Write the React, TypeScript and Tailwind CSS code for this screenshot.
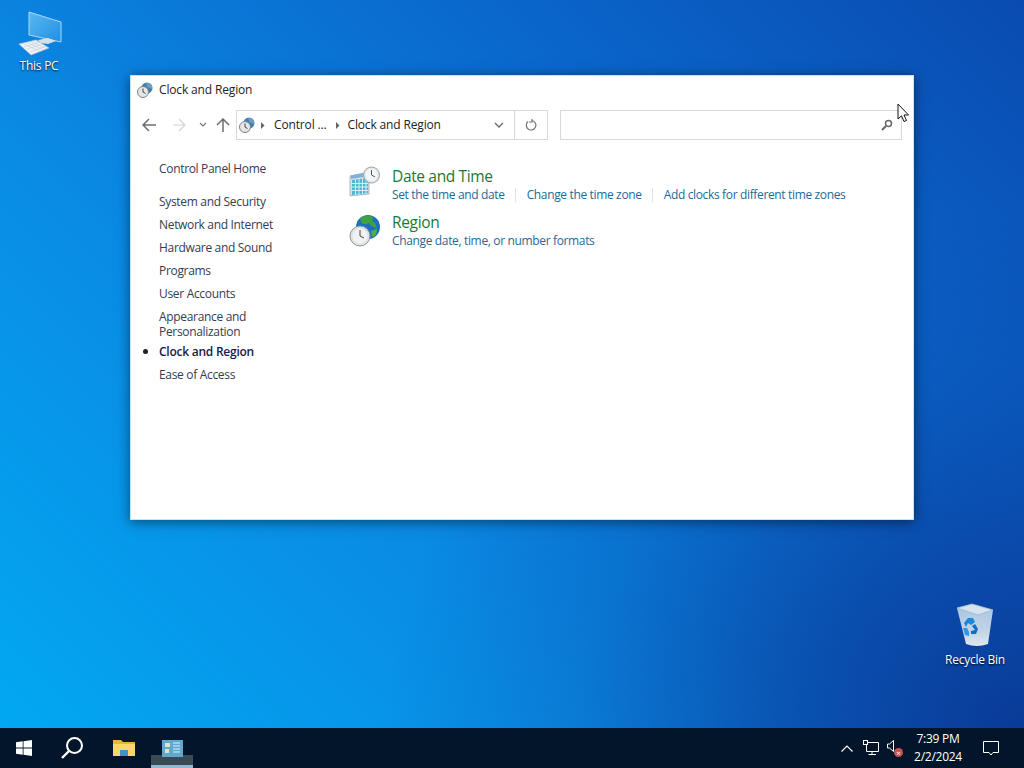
const font = { fontFamily: '"Open Sans", "Noto Sans", sans-serif' }

function ClockBadge({ size = 16 }: { size?: number }) {
  return (
    <svg width={size} height={size} viewBox="0 0 16 16">
      <circle cx="10" cy="6" r="5.500" fill="#3d7fb5" />
      <path d="M8 1.500 Q11 3 10 5 Q13 6 15 7 Q16 3 12 1 Z" fill="#6f9fb8" />
      <circle cx="6" cy="10" r="5.500" fill="#e4e6e8" stroke="#7b8288" strokeWidth="1" />
      <path d="M6 6.500V10L8.500 11.500" stroke="#444" strokeWidth="1" fill="none" />
    </svg>
  )
}

function ThisPcIcon() {
  return (
    <svg width="48" height="48" viewBox="0 0 48 48">
      <defs>
        <linearGradient id="pcScreen" x1="0" y1="0" x2="1" y2="1">
          <stop offset="0" stopColor="#5cb8f2" />
          <stop offset="1" stopColor="#1f8fe4" />
        </linearGradient>
      </defs>
      <path d="M14 3 L46 13 V33 L14 26 Z" fill="url(#pcScreen)" stroke="#a9d8f4" strokeWidth="1" />
      <path d="M23 31 L33 29 L41 32 L33 35 L25 34 Z" fill="#d5dfe6" />
      <path d="M4 35 L21 31 L34 39 L16 46 Z" fill="#eef3f7" stroke="#b7c4ce" strokeWidth="0.700" />
      <path d="M8 34.500 L25 42.500 M12 33.500 L29 41 M16 32.500 L32 40 M9 38 L25 33 M12 40 L28 35 M15 43 L31 37" stroke="#b7c4ce" strokeWidth="0.500" />
    </svg>
  )
}

function BinIcon() {
  return (
    <svg width="48" height="48" viewBox="0 0 48 48">
      <defs>
        <linearGradient id="binBody" x1="0" y1="0" x2="0" y2="1">
          <stop offset="0" stopColor="#a6c4e2" />
          <stop offset="0.700" stopColor="#c4d6e8" />
          <stop offset="1" stopColor="#e4e8ea" />
        </linearGradient>
      </defs>
      <path d="M6 5 L21 1 L42 7 L37 41 Q26 45 15 41 Z" fill="url(#binBody)" />
      <path d="M6 5 L21 1 L42 7 L27 12 Z" fill="#d6e3ee" stroke="#9db6cc" strokeWidth="0.800" />
      <path d="M13 20 L17 15 L22 15 L24 19 L20 22 L17 20 L15 24 Z" fill="#1a86dc" />
      <path d="M24 21 L27 26 L25 31 L20 31 L20 28 L24 27 L21 23 Z" fill="#0f6fc4" />
      <path d="M12 25 L16 25 L18 29 L18 33 L14 32 Z" fill="#2d97e6" />
    </svg>
  )
}

function DateTimeIcon() {
  return (
    <svg width="32" height="32" viewBox="0 0 32 32">
      <path d="M1 10 L20 6 V28 L1 30 Z" fill="#d5e3ec" stroke="#8fa3b3" strokeWidth="0.700" />
      <path d="M2 9.500 L20 6 V10 L2 13 Z" fill="#7fb2d4" />
      <path d="M3 14 L19 12 V27 L3 29 Z" fill="#4bb8d6" />
      <path d="M3 17.500 H19 M3 21 H19 M3 24.500 H19 M6.500 13.500 V29 M10 13 V28.500 M13.500 12.700 V28 M17 12.300 V27.500" stroke="#e8f4f8" strokeWidth="0.900" />
      <circle cx="22.500" cy="9" r="8" fill="#e6e8ea" stroke="#9aa1a7" strokeWidth="1" />
      <circle cx="22.500" cy="9" r="6" fill="#f4f5f6" />
      <path d="M22.500 4 V9 L26 11" stroke="#555" strokeWidth="1" fill="none" />
    </svg>
  )
}

function RegionIcon() {
  return (
    <svg width="32" height="34" viewBox="0 0 32 34">
      <circle cx="19" cy="13" r="12" fill="#1f6fc0" />
      <path d="M11 4 Q18 0 24 3 Q22 8 26 9 L28 14 Q22 13 20 9 Q15 12 12 8 Z" fill="#3fa33d" />
      <path d="M22 17 L28 15 Q28 22 23 23 Z" fill="#4caf3f" />
      <circle cx="11" cy="22" r="10" fill="#dfe1e3" stroke="#8e959b" strokeWidth="1" />
      <circle cx="11" cy="22" r="7.500" fill="#f1f2f3" />
      <path d="M11 16 V22 L15 24" stroke="#444" strokeWidth="1" fill="none" />
    </svg>
  )
}

function NavLink({ children, active }: { children: React.ReactNode; active?: boolean }) {
  return (
    <div className={`relative text-[12px] leading-[15px] ${active ? 'font-semibold tracking-[-0.25px] text-[#1a1a4a]' : 'tracking-[-0.32px] text-[#333d4f]'}`}>
      {active && <span className="absolute -left-[16px] top-[5px] h-[5px] w-[5px] rounded-full bg-[#222]" />}
      {children}
    </div>
  )
}

function TaskLink({ children }: { children: React.ReactNode }) {
  return <span className="text-[#1e6a96]">{children}</span>
}

function Divider() {
  return <span className="mx-[10.500px] h-[14px] w-px bg-[#e2e2e2]" />
}

function Crumb() {
  return (
    <svg width="5" height="7" viewBox="0 0 5 7" fill="#666">
      <path d="M1 0L4.500 3.500L1 7Z" />
    </svg>
  )
}

export default function App() {
  return (
    <div className="flex h-screen w-screen flex-col overflow-hidden" style={font}>
      <div
        className="relative flex-1"
        style={{
          background:
            'radial-gradient(ellipse 640px 520px at 100% 100%, #0a3a98 0%, rgba(10,58,152,0.65) 35%, rgba(10,58,152,0.2) 70%, rgba(10,58,152,0) 100%), linear-gradient(225deg, #0a4bb0 0%, #0a66cc 30%, #0a8ae4 65%, #02a8f2 100%)',
        }}
      >
        {/* desktop icons */}
        <div className="absolute left-[14px] top-[9px] flex w-[50px] flex-col items-center">
          <ThisPcIcon />
          <span className="mt-[1px] whitespace-nowrap text-[12px] leading-[16px] tracking-[-0.25px] text-white [text-shadow:0_1px_2px_#000]">This PC</span>
        </div>
        <div className="absolute left-[945px] top-[603px] flex w-[60px] flex-col items-center">
          <BinIcon />
          <span className="mt-[1px] whitespace-nowrap text-[12px] leading-[16px] tracking-[-0.25px] text-white [text-shadow:0_1px_2px_#000]">Recycle Bin</span>
        </div>

        {/* Clock and Region window */}
        <div className="absolute left-[130px] top-[75px] flex h-[445px] w-[784px] flex-col bg-white shadow-[0_2px_12px_rgba(0,0,0,0.5)] outline outline-1 -outline-offset-1 outline-[#bfe6fa]">
          <div className="flex h-[30px] items-center gap-[6px] pl-[7px]">
            <ClockBadge />
            <span className="text-[12px] tracking-[-0.15px] text-[#222]">Clock and Region</span>
          </div>

          <div className="mt-[5px] flex h-[30px] items-center pl-[12px]">
            <svg width="14" height="14" viewBox="0 0 14 14" fill="none" stroke="#6d6d6d" strokeWidth="1.500">
              <path d="M1 7H14M7 1L1 7L7 13" />
            </svg>
            <svg className="ml-[16px]" width="14" height="14" viewBox="0 0 14 14" fill="none" stroke="#d4d4d4" strokeWidth="1.200">
              <path d="M1 7H13M7 1L13 7L7 13" />
            </svg>
            <svg className="ml-[13px]" width="8" height="6" viewBox="0 0 8 6" fill="none" stroke="#777" strokeWidth="1.200">
              <path d="M1 1L4 4L7 1" />
            </svg>
            <svg className="ml-[9px]" width="14" height="14" viewBox="0 0 14 14" fill="none" stroke="#6d6d6d" strokeWidth="1.500">
              <path d="M7 14V1M1 7L7 1L13 7" />
            </svg>
            <div className="ml-[6px] flex h-[30px] w-[312px] items-center border border-[#d9d9d9]">
              <div className="ml-[2px]"><ClockBadge /></div>
              <span className="ml-[5px]"><Crumb /></span>
              <span className="ml-[9px] text-[12px] tracking-[-0.15px] text-[#222]">Control ...</span>
              <span className="ml-[8px]"><Crumb /></span>
              <span className="ml-[8px] text-[12px] tracking-[-0.15px] text-[#222]">Clock and Region</span>
              <svg className="ml-auto mr-[10px]" width="10" height="6" viewBox="0 0 10 6" fill="none" stroke="#666" strokeWidth="1.300">
                <path d="M1 1L5 5L9 1" />
              </svg>
              <div className="flex h-full w-[33px] items-center justify-center border-l border-[#d9d9d9]">
                <svg width="12" height="12" viewBox="0 0 12 12" fill="none" stroke="#777" strokeWidth="1.200">
                  <path d="M7 1.500A4.800 4.800 0 1 1 3 2.500M7 0V3H4" />
                </svg>
              </div>
            </div>
            <div className="ml-[12px] flex h-[30px] w-[342px] items-center justify-end border border-[#d9d9d9] pr-[8px]">
              <svg width="12" height="12" viewBox="0 0 12 12" fill="none" stroke="#666" strokeWidth="1.500">
                <circle cx="7.500" cy="4.500" r="3" />
                <path d="M5 7L1 11" strokeWidth="2" />
              </svg>
            </div>
          </div>

          <div className="flex flex-1">
            <div className="flex w-[219px] flex-col pl-[29px] pt-[21px]">
              <NavLink>Control Panel Home</NavLink>
              <div className="mt-[18px] flex flex-col gap-[8px]">
                <NavLink>System and Security</NavLink>
                <NavLink>Network and Internet</NavLink>
                <NavLink>Hardware and Sound</NavLink>
                <NavLink>Programs</NavLink>
                <NavLink>User Accounts</NavLink>
                <NavLink>Appearance and<br />Personalization</NavLink>
                <div className="-mt-[3px]"><NavLink active>Clock and Region</NavLink></div>
                <NavLink>Ease of Access</NavLink>
              </div>
            </div>

            <div className="flex flex-col gap-[9px] pt-[26px]">
              <div className="flex">
                <div className="w-[43px]"><DateTimeIcon /></div>
                <div>
                  <div className="text-[15.500px] leading-[20px] tracking-[-0.35px] text-[#1a7a2e]">Date and Time</div>
                  <div className="mt-[1px] flex items-center text-[12px] leading-[16px] tracking-[-0.35px]">
                    <TaskLink>Set the time and date</TaskLink>
                    <Divider />
                    <TaskLink>Change the time zone</TaskLink>
                    <Divider />
                    <TaskLink>Add clocks for different time zones</TaskLink>
                  </div>
                </div>
              </div>
              <div className="flex">
                <div className="w-[43px] pt-[2px]"><RegionIcon /></div>
                <div>
                  <div className="text-[15.500px] leading-[20px] tracking-[-0.35px] text-[#1a7a2e]">Region</div>
                  <div className="mt-[1px] text-[12px] leading-[16px] tracking-[-0.35px]">
                    <TaskLink>Change date, time, or number formats</TaskLink>
                  </div>
                </div>
              </div>
            </div>
          </div>
        </div>

        {/* mouse pointer */}
        <svg className="absolute left-[897px] top-[103px]" width="13" height="20" viewBox="0 0 13 20">
          <path d="M1 1V16L4.500 12.800L7 18.500L9.500 17.500L7 12H11.500Z" fill="#fff" stroke="#111" strokeWidth="1" />
        </svg>
      </div>

      {/* taskbar */}
      <div className="flex h-10 items-center bg-[#03152a] text-white">
        <div className="flex w-12 items-center justify-center">
          <svg width="16" height="16" viewBox="0 0 16 16" fill="#fff">
            <path d="M0 2.300L6.700 1.300V7.600H0ZM7.500 1.200L16 0V7.600H7.500ZM0 8.400H6.700V14.700L0 13.700ZM7.500 8.400H16V16L7.500 14.800Z" />
          </svg>
        </div>
        <div className="flex w-[48px] items-center justify-center">
          <svg width="24" height="24" viewBox="0 0 24 24" fill="none" stroke="#fff" strokeWidth="2">
            <circle cx="14.500" cy="9.500" r="7.500" />
            <path d="M9 15L2 22" strokeWidth="2.400" />
          </svg>
        </div>
        <div className="flex w-[55px] items-center justify-center">
          <svg width="22" height="20" viewBox="0 0 22 20">
            <path d="M0 2H8L10 4H22V18H0Z" fill="#e6b63c" />
            <path d="M0 6H22V18H0Z" fill="#fbd66a" />
            <path d="M7 12H15V18H7Z" fill="#3f94c9" />
          </svg>
        </div>
        <div className="relative flex h-10 w-[42px] justify-center bg-gradient-to-b from-transparent from-[68%] to-[#3a4a55] to-[68%]">
          <svg className="mt-[12px] ml-[0px]" width="21" height="17" viewBox="0 0 21 17">
            <rect x="0" y="0" width="21" height="17" fill="#5fa8d0" />
            <path d="M3 3H8V7H3ZM3 9H7V13H3Z" fill="#e8e2b0" />
            <path d="M11 3H18M11 6H18M11 9H18M11 12H18" stroke="#dff0fa" />
          </svg>
          <span className="absolute bottom-0 left-0 h-[3px] w-full bg-[#8fb8d4]" />
        </div>

        <div className="ml-auto flex items-center">
          <svg width="12" height="7" viewBox="0 0 12 7" fill="none" stroke="#fff" strokeWidth="1.200">
            <path d="M0.500 6.500L6 1L11.500 6.500" />
          </svg>
          <svg className="ml-[10px]" width="16" height="16" viewBox="0 0 16 16" fill="none" stroke="#fff" strokeWidth="1">
            <path d="M3.500 2.500H15.500V11.500H3.500ZM9 11.500V14.500M5.500 14.500H13" />
            <rect x="0.500" y="0.500" width="4" height="4" fill="#03152a" />
          </svg>
          <div className="relative ml-[8px] h-4 w-[16px]">
            <svg width="7" height="12" viewBox="0 0 7 12" fill="none" stroke="#fff" strokeWidth="1">
              <path d="M0.500 4H2.500L6.500 0.500V11.500L2.500 8H0.500Z" />
            </svg>
            <span className="absolute bottom-[-1px] right-0 flex h-[9px] w-[9px] items-center justify-center rounded-full bg-[#c8534f] text-[8px] leading-none text-white">×</span>
          </div>
          <div className="ml-[4px] flex w-[62px] flex-col items-center text-[12px] leading-[18px] tracking-[-0.25px]">
            <span>7:39 PM</span>
            <span>2/2/2024</span>
          </div>
          <svg className="ml-[14px] mr-[25px]" width="16" height="16" viewBox="0 0 16 16" fill="none" stroke="#fff" strokeWidth="1">
            <path d="M0.500 1.500H15.500V12.500H10L8 15L6 12.500H0.500Z" />
          </svg>
        </div>
      </div>
    </div>
  )
}
